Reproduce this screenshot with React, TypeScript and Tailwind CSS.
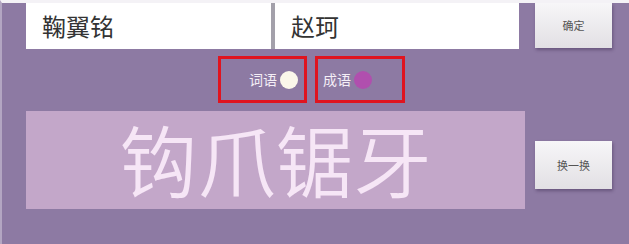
import React from "react";

const cjk = { fontFamily: '"Noto Sans CJK SC", "Noto Sans", sans-serif' };

function Btn({ label, h }: { label: string; h: string }) {
  return (
    <div
      className={`w-[77px] ${h} flex items-center justify-center bg-gradient-to-b from-[#f7f6f8] to-[#e2e0e4] shadow-[1px_2px_3px_rgba(60,40,80,0.45)] text-[11px] text-[#555] font-normal`}
      style={cjk}
    >
      {label}
    </div>
  );
}

export default function App() {
  return (
    <div
      className="w-[629px] h-[244px] bg-[#8d7aa3] border-t-[3px] border-l-[2px] border-t-[#f4f2f6] border-l-[#b3a6c2] flex flex-col overflow-hidden"
      style={cjk}
    >
      {/* row 1 */}
      <div className="flex items-start pl-[24px]">
        <div className="w-[245px] h-[46px] bg-white flex items-center pl-[16px] text-[24px] text-[#333] font-normal">
          鞠翼铭
        </div>
        <div className="w-[4px] h-[46px] bg-[#a3a0aa]" />
        <div className="w-[244px] h-[46px] bg-white flex items-center pl-[16px] text-[24px] text-[#333] font-normal">
          赵珂
        </div>
        <div className="ml-[16px]">
          <Btn label="确定" h="h-[45px]" />
        </div>
      </div>

      {/* row 2 */}
      <div className="flex pl-[216px] gap-[8px] mt-[7px]">
        <div className="w-[89px] h-[47px] border-[3px] border-[#e0141f] flex items-center justify-end pr-[6px] gap-[3px]">
          <span className="text-[14px] text-[#f4eef6]">词语</span>
          <span className="w-[18px] h-[18px] rounded-full bg-[#fbf7ea]" />
        </div>
        <div className="w-[90px] h-[47px] border-[3px] border-[#e0141f] flex items-center pl-[5px] gap-[3px]">
          <span className="text-[14px] text-[#f4eef6]">成语</span>
          <span className="w-[18px] h-[18px] rounded-full bg-[#b04fae]" />
        </div>
      </div>

      {/* row 3 */}
      <div className="flex items-start pl-[24px] mt-[8px]">
        <div className="w-[499px] h-[98px] bg-[#c3a7c9] flex items-center justify-center pb-[5px]">
          <span className="text-[78px] leading-none font-[350] text-[#f6e6f6]">钩爪锯牙</span>
        </div>
        <div className="ml-[10px] mt-[30px]">
          <Btn label="换一换" h="h-[48px]" />
        </div>
      </div>
    </div>
  );
}
